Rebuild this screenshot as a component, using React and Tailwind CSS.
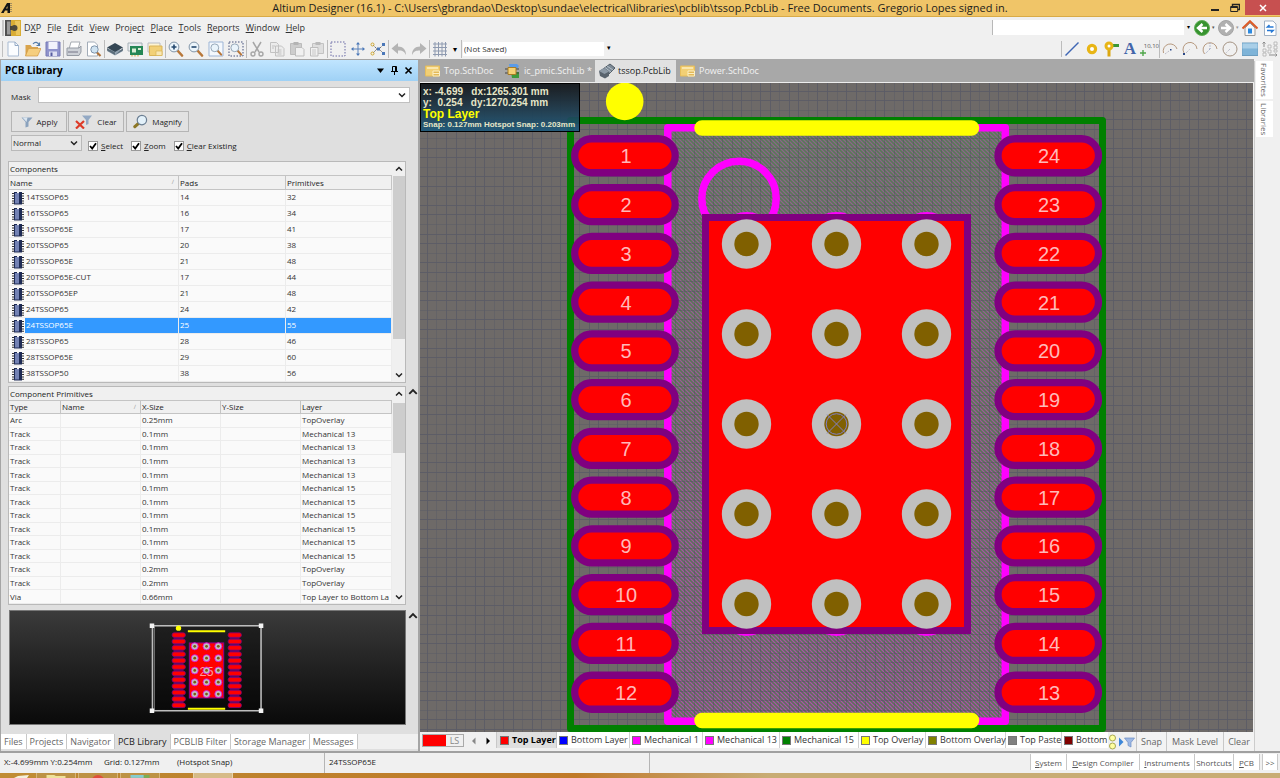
import React from "react";

const COMPONENTS = [
  ["14TSSOP65", 14, 32],
  ["16TSSOP65", 16, 34],
  ["16TSSOP65E", 17, 41],
  ["20TSSOP65", 20, 38],
  ["20TSSOP65E", 21, 48],
  ["20TSSOP65E-CUT", 17, 44],
  ["20TSSOP65EP", 21, 48],
  ["24TSSOP65", 24, 42],
  ["24TSSOP65E", 25, 55],
  ["28TSSOP65", 28, 46],
  ["28TSSOP65E", 29, 60],
  ["38TSSOP50", 38, 56],
];

const PRIMITIVES = [
  ["Arc", "0.25mm", "TopOverlay"],
  ["Track", "0.1mm", "Mechanical 13"],
  ["Track", "0.1mm", "Mechanical 13"],
  ["Track", "0.1mm", "Mechanical 13"],
  ["Track", "0.1mm", "Mechanical 13"],
  ["Track", "0.1mm", "Mechanical 15"],
  ["Track", "0.1mm", "Mechanical 15"],
  ["Track", "0.1mm", "Mechanical 15"],
  ["Track", "0.1mm", "Mechanical 15"],
  ["Track", "0.1mm", "Mechanical 15"],
  ["Track", "0.1mm", "Mechanical 15"],
  ["Track", "0.2mm", "TopOverlay"],
  ["Track", "0.2mm", "TopOverlay"],
  ["Via", "0.66mm", "Top Layer to Bottom La"],
];

const MENUS = [
  ["D", "X", "P"],
  ["", "F", "ile"],
  ["", "E", "dit"],
  ["", "V", "iew"],
  ["Proje", "c", "t"],
  ["", "P", "lace"],
  ["", "T", "ools"],
  ["", "R", "eports"],
  ["", "W", "indow"],
  ["", "H", "elp"],
];

const LAYERS = [
  ["Bottom Layer", "bg-[#0000ff]", "w-[73px]"],
  ["Mechanical 1", "bg-[#ff00ff]", "w-[73px]"],
  ["Mechanical 13", "bg-[#ff00ff]", "w-[77px]"],
  ["Mechanical 15", "bg-[#008000]", "w-[79px]"],
  ["Top Overlay", "bg-[#ffff00]", "w-[67px]"],
  ["Bottom Overlay", "bg-[#808000]", "w-[80px]"],
  ["Top Paste", "bg-[#808080]", "w-[56px]"],
  ["Bottom", "bg-[#800000]", "w-[73px]"],
];

function Ico({ children, className = "h-4 w-4" }) {
  return (
    <svg viewBox="0 0 16 16" className={`${className} shrink-0`} fill="none" aria-hidden="true">
      {children}
    </svg>
  );
}

function Tool({ label, children, className = "w-5" }) {
  return (
    <button type="button" aria-label={label} className={`flex h-5 shrink-0 items-center justify-center ${className}`}>
      <Ico>{children}</Ico>
    </button>
  );
}

const Sep = () => <span className="h-[18px] w-px shrink-0 bg-[#bcbcbc]" />;

function Chevron({ up = false, className = "h-2 w-2" }) {
  return (
    <svg viewBox="0 0 8 8" className={className} fill="none" stroke="#222" strokeWidth="1.5" aria-hidden="true">
      <path d={up ? "M1 5.5 4 2.5 7 5.5" : "M1 2.5 4 5.5 7 2.5"} />
    </svg>
  );
}

function Lens({ cx = 6, cy = 6, sign }) {
  return (
    <g>
      <path d={`M${cx + 3} ${cy + 3}L${cx + 8} ${cy + 8.5}`} stroke="#b8773a" strokeWidth="2.6" strokeLinecap="round" />
      <circle cx={cx} cy={cy} r="4.9" fill="#eaf4fb" stroke="#8295a8" />
      {sign && <path d={sign} stroke="#23476e" strokeWidth="1.6" />}
    </g>
  );
}

function ChipIcon() {
  return (
    <svg viewBox="0 0 12 14" className="h-[14px] w-3 shrink-0" aria-hidden="true">
      <path d="M0 2.500h12M0 5h12M0 7.500h12M0 10h12M0 12.200h12" stroke="#333" strokeWidth="1.1" />
      <rect x="2" y="1" width="8" height="12.5" fill="#1e2b55" />
      <rect x="3" y="2" width="4" height="10.5" fill="#7382b4" />
      <rect x="5" y="0.5" width="2" height="1.6" fill="#f4f4f4" />
    </svg>
  );
}

function SheetIcon() {
  return (
    <Ico className="h-4 w-4">
      <path d="M.5 3h14v10h-14z" fill="#f2cf74" stroke="#e6bd5b" />
      <path d="M2 5h11" stroke="#fae6ac" strokeWidth="2" />
      <path d="M8 8h6.500v5H8zM8 10.500h6.500" stroke="#fbeec4" fill="#e3b958" />
    </Ico>
  );
}

function Funnel({ className = "h-3 w-3", fill = "#8aa2bd" }) {
  return (
    <svg viewBox="0 0 12 12" className={`${className} shrink-0`} aria-hidden="true">
      <path d="M.5 1.500h11L7.500 6v4.500l-3 1V6z" fill={fill} />
      <path d="M1.500 1.500h5L5.500 6z" fill="#dbe6f0" />
    </svg>
  );
}

function MainMenu() {
  return (
    <div className="flex h-[21px] shrink-0 items-center bg-[#f0f0f0]">
      <span className="ml-[2px] h-4 w-[2px] bg-[#c8c8c8]" />
      <svg viewBox="0 0 16 16" className="ml-px h-4 w-4" aria-hidden="true">
        <rect width="16" height="16" fill="#d9ad35" />
        <path d="M0 0h6v16H0z" fill="#515151" />
        <path d="M2 1.500h3.500v13H2z" fill="#9a9a9a" />
        <path d="M10 1h5v14h-4z" fill="#ecc75e" />
        <path d="M5 6h5v4H5z" fill="#4a463a" />
        <circle cx="9.5" cy="8" r="3" fill="#4f4a3c" />
      </svg>
      <nav className="ml-[3px] flex flex-1 gap-[6px]">
        {MENUS.map(([a, b, c]) => (
          <button type="button" key={a + b + c} className="leading-3 text-[#303030]">
            {a}
            <u>{b}</u>
            {c}
          </button>
        ))}
      </nav>
      <label className="flex h-[15px] w-[200px] items-center border-l border-[#b8b8b8] bg-white">
        <input aria-label="Address" className="h-full min-w-0 flex-1 bg-white outline-none" />
        <span className="flex h-full w-2 items-center justify-center bg-[#f0f0f0] text-[6px] text-black">▾</span>
      </label>
      <Tool label="Back" className="w-5">
        <circle cx="8" cy="8" r="7.5" fill="#37932f" stroke="#5fae55" />
        <path d="M13 8H5M8.500 4 4 8l4.500 4" stroke="#fff" strokeWidth="2.4" />
      </Tool>
      <span className="w-1 text-[5px] text-[#555]">▾</span>
      <Tool label="Forward" className="w-5">
        <circle cx="8" cy="8" r="7.5" fill="#b0b0b0" stroke="#a4a4a4" />
        <path d="M3 8h8M7.500 4 12 8l-4.500 4" stroke="#fff" strokeWidth="2.4" />
      </Tool>
      <span className="w-1 text-[5px] text-[#999]">▾</span>
      <Tool label="Home" className="w-5">
        <path d="M3 8v7.500h10V8L8 3z" fill="#f7f7f7" stroke="#999" />
        <path d="M.5 8.500 8 1.200l7.500 7.300" stroke="#dc5a26" strokeWidth="2" />
        <path d="M6 8.500h4v5H6z" fill="#2d8ae0" />
      </Tool>
      <Tool label="Refresh" className="w-5">
        <path d="M2.500 1h8.500l3 3v11.500H2.500z" fill="#fff" stroke="#9fb0c4" />
        <path d="M11.500 7H5.500l2-2M5 10.500h6l-2 2" stroke="#2779d5" strokeWidth="1.6" />
      </Tool>
    </div>
  );
}

function Toolbar() {
  return (
    <div className="flex h-[21px] shrink-0 items-center bg-[#f0f0f0]">
      <span className="ml-[2px] h-4 w-px shrink-0 bg-[#c0c0c0]" />
      <Tool label="New">
        <path d="M3 1h7l3.500 3.500V15H3z" fill="#fbfdff" stroke="#a9bbd2" />
        <path d="M10 1v3.500h3.500" stroke="#93a9c5" />
      </Tool>
      <Tool label="Open">
        <path d="M.5 4h5l1.500 2h6v9H.5z" fill="#d9a44c" />
        <path d="M3.500 7.500H16L12.500 15H.5z" fill="#f5ce7e" stroke="#d19a44" strokeWidth=".7" />
        <path d="M8 3c2-2.500 5-2 6 1M14.500 1.500V4.500H11.500" stroke="#547ca8" strokeWidth="1.2" />
      </Tool>
      <Tool label="Save">
        <path d="M1 1h14v14H1z" fill="#8f93cc" stroke="#777bb6" />
        <path d="M3.500 1h9v7h-9z" fill="#f2f3fc" />
        <path d="M4 10.500h8V15H4z" fill="#dfe1f3" />
        <path d="M5.500 11.500h2V15h-2z" fill="#575ca0" />
      </Tool>
      <Sep />
      <Tool label="Print">
        <path d="M5 1h9l-2 7H3z" fill="#fff" stroke="#a6abb2" />
        <path d="M1 7h12l2-2v6l-2 3.500H1z" fill="#cdd1d7" stroke="#959ba4" />
        <path d="M2 11h10" stroke="#778" />
      </Tool>
      <Tool label="Preview">
        <path d="M1.500 1h7l3 3v11h-10z" fill="#fff" stroke="#a2acb8" />
        <path d="m10.500 11 4 4" stroke="#ad7037" strokeWidth="2.2" />
        <circle cx="8.5" cy="8.5" r="3.7" fill="#cfe3f2" stroke="#7f95ab" />
      </Tool>
      <Sep />
      <Tool label="Layer stack">
        <path d="m0 10 8-4 8 4-8 4.500z" fill="#93a3b1" />
        <path d="m0 6.500 8-4.500 8 4.500L8 11z" fill="#354755" />
        <path d="M0 7v2.500l8 4.500V11.500zM16 7v2.500L8 14" fill="#5b6d7b" />
      </Tool>
      <Tool label="Board">
        <path d="M1 2h14v8H1z" fill="#e9edf0" stroke="#a6b0b6" />
        <path d="M3 5h13v9H3z" fill="#258755" />
        <path d="M5 7.500h4v4H5zM11 7h3v2h-3z" fill="#d9ecd4" />
        <path d="M5 14v1.500M8 14v1.500M11 14v1.500" stroke="#d6a632" />
      </Tool>
      <Tool label="Documents">
        <path d="M1 2h12v9H1z" fill="#fdf3d3" stroke="#b9bdc4" />
        <path d="M2.500 5H15v9.500H2.500z" fill="#f2d077" stroke="#d9b458" />
        <path d="M9 10h6v4.500H9z" fill="#f9e7b4" stroke="#d9b458" strokeWidth=".7" />
      </Tool>
      <Sep />
      <Tool label="Zoom in"><Lens sign="M3.500 6h5M6 3.500v5" /></Tool>
      <Tool label="Zoom out"><Lens sign="M3.500 6h5" /></Tool>
      <Tool label="Fit document">
        <path d="M1 1h14v14H1z" fill="#f4f8fd" stroke="#9db5d6" />
        <g transform="translate(2 2) scale(.8)"><Lens /></g>
      </Tool>
      <Tool label="Zoom selection">
        <path d="M1 1h14v14H1z" stroke="#46527c" strokeDasharray="1.5 1.5" />
        <g transform="translate(2 2) scale(.8)"><Lens /></g>
      </Tool>
      <Sep />
      <Tool label="Cut">
        <path d="m4 1 6 10M12 1 6 11" stroke="#a6a6a6" strokeWidth="1.5" />
        <circle cx="4" cy="13" r="2" stroke="#a6a6a6" strokeWidth="1.4" />
        <circle cx="12" cy="13" r="2" stroke="#a6a6a6" strokeWidth="1.4" />
      </Tool>
      <Tool label="Copy">
        <path d="M1.500 1.500h6l2 2v8h-8zM6.500 5h6l2.500 2.500v7.500H6.500z" fill="#ececec" stroke="#c2c2c2" />
        <path d="M8.500 9h4M8.500 11h4M8.500 13h4M3 5h3M3 7h2" stroke="#c2c2c2" />
      </Tool>
      <Tool label="Paste">
        <path d="M1.500 2.500h11v11h-11z" fill="#cdcdcd" stroke="#bcbcbc" />
        <path d="M4.500 1h5v3h-5z" fill="#b4b4b4" />
        <path d="M6.500 6.500H13l2 2V15H6.500z" fill="#f0f0f0" stroke="#bdbdbd" />
      </Tool>
      <Tool label="Paste array">
        <path d="M3.500 2.500h11v10h-11z" fill="#dedede" stroke="#c2c2c2" />
        <path d="M6.500 1h5v3h-5z" fill="#bababa" />
        <path d="M1.500 6.500H9V15H1.500z" fill="#f0f0f0" stroke="#bdbdbd" />
        <path d="M3 9h4M3 11h4M3 13h4" stroke="#c8c8c8" />
      </Tool>
      <Sep />
      <Tool label="Select area">
        <path d="M1 1h14v14H1z" stroke="#6a6aa6" strokeDasharray="1.5 1.5" />
      </Tool>
      <Tool label="Move">
        <path d="M8 2v12M2 8h12" stroke="#5c83bb" />
        <path d="m8 1 2 2.500H6zM8 15l2-2.500H6zM1 8l2.500-2v4zM15 8l-2.500-2v4z" fill="#4b78b8" />
      </Tool>
      <Tool label="Cross probe">
        <path d="m3 4 4 4-4 4" stroke="#666" strokeDasharray="2 1" />
        <path d="m13 4-4 4 4 4" stroke="#666" strokeDasharray="2 1" />
        <circle cx="2.5" cy="3.5" r="1.5" stroke="#d0a92f" />
        <circle cx="2.5" cy="12.5" r="1.5" stroke="#d0a92f" />
        <path d="M12 2h3v3h-3zM12 11h3v3h-3zM7 6.500h3v3H7z" fill="#4b78b8" />
      </Tool>
      <Sep />
      <Tool label="Undo"><path d="M7 2v3.500c5 0 8 3 8 8.500-2-4-4-4.500-8-4.500V13L.5 7.500z" fill="#b4b4b4" /></Tool>
      <Tool label="Redo"><path d="M9 2v3.500c-5 0-8 3-8 8.500 2-4 4-4.500 8-4.500V13l6.500-5.500z" fill="#b4b4b4" /></Tool>
      <Sep />
      <Tool label="Grid"><path d="M1 3h14M1 6.500h14M1 10h14M1 13.500h14M3 1v14.500M6.500 1v14.500M10 1v14.500M13.500 1v14.500" stroke="#8e9ab0" /></Tool>
      <span className="w-[9px] text-center text-[8px] text-black">▾</span>
      <span className="w-[2px]" />
      <Sep />
      <label className="relative ml-px flex h-[14px] w-[150px] shrink-0 items-center bg-white">
        <select aria-label="Saved view" className="h-full w-full appearance-none bg-white pl-px text-[8px] leading-[14px] text-[#333]">
          <option>(Not Saved)</option>
        </select>
        <span className="pointer-events-none absolute inset-y-0 right-0 flex w-[9px] items-center justify-center bg-[#f0f0f0] text-[7px] text-black">▾</span>
      </label>
      <span className="flex-1" />
      <span className="h-4 w-px bg-[#bcbcbc]" />
      <Tool label="Place line"><path d="M1.500 14.500 14.500 1.500" stroke="#3f66b4" strokeWidth="1.5" /></Tool>
      <Tool label="Place pad" className="w-[19px]"><circle cx="8" cy="8" r="3.6" stroke="#e8b515" strokeWidth="3.2" fill="#fff" /></Tool>
      <Tool label="Place via" className="w-[19px]">
        <path d="M7.500 4.500H16" stroke="#3d9834" strokeWidth="3" />
        <path d="M6 8v7.500" stroke="#dba710" strokeWidth="3" />
        <circle cx="6" cy="5" r="3" stroke="#e8b515" strokeWidth="3" fill="#fff" />
      </Tool>
      <button type="button" aria-label="Place text" className="h-5 w-5 shrink-0 font-['Liberation_Serif',serif] text-[17px] leading-5 font-bold text-[#4365aa]">A</button>
      <button type="button" aria-label="Place coordinate" className="relative flex h-5 w-[19px] shrink-0 justify-end pt-[3px] text-[6px] leading-[8px] text-[#555]">
        10,10
        <svg viewBox="0 0 6 6" className="absolute bottom-[3px] left-0 h-[6px] w-[6px]" stroke="#4fa64a" strokeWidth="1.4" aria-hidden="true"><path d="M3 0v6M0 3h6" /></svg>
      </button>
      <Sep />
      <Tool label="Arc by center">
        <path d="M1.500 12A7 7 0 1 1 15 8" stroke="#b79a80" />
        <path d="M8 8h1.500v1.500H8z" fill="#2b4887" /><path d="m3 13 4-3" stroke="#aab" strokeDasharray="1 1" />
      </Tool>
      <Tool label="Arc by edge">
        <path d="M2 12A7 7 0 1 1 15 8" stroke="#b79a80" /><path d="M1 12h2v2H1z" fill="#2b4887" />
        <path d="m4 12 4-4" stroke="#aab" strokeDasharray="1 1" />
      </Tool>
      <Tool label="Arc any angle">
        <path d="M2.500 13A7 7 0 1 1 15 8" stroke="#b79a80" /><path d="m8 8 0-6M8 8l-5 5" stroke="#8894b5" strokeDasharray="1 1.5" />
      </Tool>
      <Tool label="Full circle"><circle cx="8" cy="8" r="7" stroke="#a59484" /><path d="m8 8-4 4" stroke="#aab" strokeDasharray="1 1" /></Tool>
      <Tool label="Fill"><path d="M0 2h16v12.500H0z" fill="#7fb4d8" stroke="#6c9dbf" /><path d="M.5 2.500h15v5H.5z" fill="#a9cfe8" /></Tool>
      <Tool label="Array">
        <path d="M2 1v5M.5 2.500 2 1l1.500 1.500M7 14h8M13.500 12.500 15 14l-1.500 1.500" stroke="#8d8d8d" />
        <path d="M1 8h3v3H1zM1 12h3v3H1zM6 4h3v3H6zM6 9h3v3H6zM12 1h3v3h-3zM12 5h3v3h-3zM12 9h3v2h-3z" stroke="#b0b0b0" strokeWidth=".8" fill="#f5f5f5" />
      </Tool>
    </div>
  );
}

function ScrollBar({ thumb }) {
  return (
    <div className="flex w-[13px] shrink-0 flex-col items-center bg-[#f0f0f0]">
      <span className="flex h-[14px] items-center"><Chevron up /></span>
      <span className={`w-3 bg-[#cdcdcd] ${thumb}`} />
      <span className="flex-1" />
      <span className="flex h-[14px] items-center"><Chevron /></span>
    </div>
  );
}

const headCell = "border-r border-[#c4c4c4] p-0 pl-px text-left font-normal text-[#222]";
const bodyCell = "border-r border-b border-[#ececec] p-0 pl-px";

function ComponentsTable() {
  return (
    <section className="mx-[7px] flex border border-[#b9b9b9] bg-[#fafafa]">
      <div className="min-w-0 flex-1">
        <h2 className="h-[14px] border-b border-[#c4c4c4] bg-[#f0f0f0] pl-px leading-[13px]">Components</h2>
        <table className="w-full table-fixed border-separate border-spacing-0">
          <colgroup>
            <col className="w-[170px]" />
            <col className="w-[107px]" />
            <col />
          </colgroup>
          <thead>
            <tr className="h-[14px] bg-[#f0f0f0] leading-[13px]">
              <th className={`${headCell} border-b`}>
                <span className="flex justify-between pr-1">Name<span className="text-[6px] text-[#999]">∕</span></span>
              </th>
              <th className={`${headCell} border-b`}>Pads</th>
              <th className={`${headCell} border-b`}>Primitives</th>
            </tr>
          </thead>
          <tbody>
            {COMPONENTS.map(([name, pads, prims]) => {
              const sel = name === "24TSSOP65E";
              const tone = sel ? "bg-[#3399ff] text-white" : "text-[#333]";
              return (
                <tr key={name} className="h-4 leading-[13px]" aria-selected={sel}>
                  <td className="border-r border-b border-[#ececec] p-0">
                    <span className="flex h-[15px] items-center pl-[3px]">
                      <ChipIcon />
                      <span className={`ml-px flex-1 pb-[2px] pl-px ${tone}`}>{name}</span>
                    </span>
                  </td>
                  <td className={`${bodyCell} ${tone}`}><span className="block pb-[2px]">{pads}</span></td>
                  <td className={`${bodyCell} ${tone}`}><span className="block pb-[2px]">{prims}</span></td>
                </tr>
              );
            })}
          </tbody>
        </table>
      </div>
      <ScrollBar thumb="h-[163px]" />
    </section>
  );
}

function PrimitivesTable() {
  return (
    <section className="mr-[6px] ml-[7px] flex border border-[#b9b9b9] bg-[#fafafa]">
      <div className="min-w-0 flex-1">
        <h2 className="h-[14px] border-b border-[#c4c4c4] bg-[#f0f0f0] pl-px leading-[13px]">Component Primitives</h2>
        <table className="h-[203px] w-full table-fixed border-separate border-spacing-0">
          <colgroup>
            <col className="w-[52px]" />
            <col className="w-20" />
            <col className="w-20" />
            <col className="w-20" />
            <col />
          </colgroup>
          <thead>
            <tr className="h-[13px] bg-[#f0f0f0] leading-3">
              <th className={`${headCell} border-b`}>Type</th>
              <th className={`${headCell} border-b`}>
                <span className="flex justify-between pr-1">Name<span className="text-[6px] text-[#999]">∕</span></span>
              </th>
              <th className={`${headCell} border-b`}>X-Size</th>
              <th className={`${headCell} border-b`}>Y-Size</th>
              <th className={`${headCell} border-b`}>Layer</th>
            </tr>
          </thead>
          <tbody className="leading-3 text-[#333]">
            {PRIMITIVES.map(([type, x, layer], i) => (
              <tr key={i}>
                <td className={bodyCell}>{type}</td>
                <td className={bodyCell} />
                <td className={bodyCell}>{x}</td>
                <td className={bodyCell} />
                <td className={`${bodyCell} overflow-hidden whitespace-nowrap`}>{layer}</td>
              </tr>
            ))}
          </tbody>
        </table>
      </div>
      <ScrollBar thumb="mt-[2px] h-[50px]" />
    </section>
  );
}

function Preview() {
  const rows = Array.from({ length: 12 }, (_, i) => 635.5 + i * 6.5);
  return (
    <svg viewBox="10 611 396 115" className="h-[115px] min-w-0 flex-1 border border-[#777] bg-linear-to-b from-[#3b3b3b] to-[#0a0a0a]" role="img" aria-label="Footprint preview">
      <rect x="153" y="627" width="109" height="84" fill="#000" fillOpacity=".4" />
      {[171.5, 228.5].map((x) => (
        <g key={x}>
          <rect x={x + 2} y="634" width="10" height="75" fill="#560e62" />
          {rows.map((y) => (
            <rect key={y} x={x + 0.5} y={y - 2.3} width="13.5" height="4.6" rx="2" fill="#f00" stroke="#800080" strokeWidth=".8" />
          ))}
        </g>
      ))}
      <rect x="189.5" y="643.5" width="35" height="56" fill="#f00" stroke="#900090" />
      <text x="207" y="677" textAnchor="middle" fontSize="13" fill="#ff9d9d" fontFamily="Liberation Sans, sans-serif">25</text>
      {[195, 207, 219].map((x) => [647, 659, 671.5, 683.5, 695.5].map((y) => (
        <g key={`${x}-${y}`}>
          <circle cx={x} cy={y} r="3.6" fill="#c0c0c0" stroke="#e000e0" strokeWidth=".8" />
          <circle cx={x} cy={y} r="1.4" fill="#7a5a10" />
        </g>
      )))}
      <path d="M188 631.500h38M188 710.500h38" stroke="#ff0" strokeWidth="2" />
      <path d="M152 626h110.500v86.500H152z" fill="none" stroke="#bdbdbd" strokeWidth="1.6" />
      <path d="M154 626v86" stroke="#888" strokeWidth=".8" />
      <circle cx="178.5" cy="628.5" r="2.7" fill="#ff0" />
      {[[151.5, 626], [262.5, 626], [151.5, 712.5], [262.5, 712.5]].map(([x, y]) => (
        <rect key={`${x}${y}`} x={x - 2.3} y={y - 2.3} width="4.6" height="4.6" fill="#f4f4f4" />
      ))}
    </svg>
  );
}

function Check({ label, first, rest }) {
  return (
    <label className="flex items-center gap-[3px] leading-3">
      <span className="relative flex h-[10px] w-[10px]">
        <input type="checkbox" defaultChecked aria-label={label} className="peer h-[10px] w-[10px] appearance-none border border-[#999] bg-white" />
        <svg viewBox="0 0 10 10" className="pointer-events-none absolute inset-0 hidden peer-checked:block" fill="none" stroke="#000" strokeWidth="1.8" aria-hidden="true">
          <path d="M2 5 4.200 7.500 8 2.300" />
        </svg>
      </span>
      <span><u>{first}</u>{rest}</span>
    </label>
  );
}

const panelButton = "flex h-[21px] items-center justify-center gap-1 border border-[#b5b5b5] bg-[#e2e2e2] leading-3";

function LibraryPanel() {
  const tabs = ["Files", "Projects", "Navigator", "PCB Library", "PCBLIB Filter", "Storage Manager", "Messages"];
  return (
    <aside className="flex w-[420px] shrink-0 flex-col border-t border-r-2 border-l border-[#a5a5a5] bg-[#dfdfdf] text-[8px] text-[#222]">
      <header className="flex h-[21px] items-center gap-[5px] bg-linear-to-b from-[#c0e5ff] to-[#9fd1f5] pr-[5px] pl-1">
        <h1 className="flex-1 text-[10px] font-bold text-black">PCB Library</h1>
        <button type="button" aria-label="Panel menu" className="flex h-3 w-[9px] items-center">
          <svg viewBox="0 0 9 9" className="h-[9px] w-[9px]"><path d="M1 2.500h7L4.500 7z" /></svg>
        </button>
        <button type="button" aria-label="Pin" className="flex h-3 w-[9px] items-center">
          <svg viewBox="0 0 9 9" className="h-[9px] w-[9px]" fill="none" stroke="#000"><path d="M2.500 0.500h4v5h-4zM5.500 0v5.500M1 5.500h7M4.500 5.500V9" /></svg>
        </button>
        <button type="button" aria-label="Close panel" className="flex h-3 w-[9px] items-center">
          <svg viewBox="0 0 9 9" className="h-[9px] w-[9px]" stroke="#000" strokeWidth="1.6"><path d="m1.500 1.500 6 6M7.500 1.500l-6 6" /></svg>
        </button>
      </header>
      <div className="flex items-center pt-[6px] pr-2 pl-[10px]">
        <label htmlFor="mask" className="w-[27px] pt-1 leading-3">Mask</label>
        <span className="relative flex flex-1">
          <input id="mask" className="h-4 w-full border border-[#c0c0c0] bg-white px-1 outline-none" />
          <Chevron className="pointer-events-none absolute top-1 right-1 h-2 w-2" />
        </span>
      </div>
      <div className="mt-2 ml-[10px] flex gap-px">
        <button type="button" className={`${panelButton} w-14`}><Funnel />Apply</button>
        <button type="button" className={`${panelButton} w-14`}>
          <svg viewBox="0 0 18 14" className="h-[14px] w-[18px]" fill="none">
            <path d="m1 6 8 7.500M9 6l-8 7.500" stroke="#dd3a28" strokeWidth="2.2" />
            <path d="M7 .5h10L13.500 5v4l-2.500 1V5z" fill="#93a9c4" />
          </svg>
          Clear
        </button>
        <button type="button" className={`${panelButton} ml-px w-[63px]`}>
          <svg viewBox="0 0 16 16" className="h-[15px] w-[15px]" fill="none">
            <path d="m6.500 9.500-4.500 4" stroke="#8d7726" strokeWidth="3.4" strokeLinecap="round" />
            <circle cx="9.5" cy="6.5" r="5" fill="#e3f1fa" stroke="#6b7f93" strokeWidth="1.3" />
          </svg>
          Magnify
        </button>
      </div>
      <div className="mt-[3px] ml-[10px] flex h-[17px] items-start">
        <label className="relative flex h-4 w-[71px] items-center border border-[#b9b9b9] bg-[#e6e6e6]">
          <select aria-label="Highlight mode" className="h-full w-full appearance-none pl-px leading-[14px]">
            <option>Normal</option>
          </select>
          <Chevron className="pointer-events-none absolute right-[3px] h-2 w-2" />
        </label>
        <div className="mt-[5px] ml-[6px] flex gap-2">
          <Check label="Select" first="S" rest="elect" />
          <Check label="Zoom" first="Z" rest="oom" />
          <Check label="Clear Existing" first="C" rest="lear Existing" />
        </div>
      </div>
      <div className="mt-[9px] mr-[5px]"><ComponentsTable /></div>
      <div className="mt-[3px] flex items-start">
        <div className="min-w-0 flex-1"><PrimitivesTable /></div>
        <span className="-ml-[4px] flex h-3 w-[10px] items-center"><Chevron up className="h-[10px] w-[10px]" /></span>
      </div>
      <div className="mt-[5px] flex items-start pl-2">
        <Preview />
        <span className="ml-[2px] flex h-3 w-[10px] items-center"><Chevron up className="h-[10px] w-[10px]" /></span>
      </div>
      <nav className="mt-auto mb-[2px] flex h-[15px] bg-[#f0f0f0] text-[9px]">
        {tabs.map((t) => (
          <button
            type="button"
            key={t}
            className={`border-r border-[#c8c8c8] px-[3px] leading-[14px] whitespace-nowrap ${t === "PCB Library" ? "bg-[#dfdfdf] text-[#222]" : "bg-white text-[#666]"}`}
          >
            {t}
          </button>
        ))}
      </nav>
    </aside>
  );
}

/* Footprint drawing: 0.127 mm grid, 0.65 mm pad pitch, origin at the centre via. */
const CX = 836.5;
const CY = 424;
const GRID = 9.525;
const PITCH = 48.77;

function Canvas() {
  const pads = Array.from({ length: 12 }, (_, i) => CY + (i - 5.5) * PITCH);
  const cols = Array.from({ length: 90 }, (_, i) => i - 45);
  const ringY = [244, 334, 424, 514, 604];
  const ringX = [746.5, 836.5, 926.5];
  return (
    <svg viewBox="420 83 833 649" preserveAspectRatio="xMidYMid slice" className="block min-h-[600px] w-full flex-1 bg-[#6e6a68]" role="img" aria-label="24TSSOP65E footprint">
      <defs>
        <pattern id="hatch" width="4" height="4" patternUnits="userSpaceOnUse">
          <path d="M-1-1 5 5M3-1 5 1M-1 3 1 5" stroke="#b34cb3" strokeWidth="1.1" />
          <path d="M1-1 5 3M-1 1 3 5" stroke="#4d7a4d" strokeWidth="1.1" />
        </pattern>
        <linearGradient id="moire" x1="0" y1="0" x2="0" y2="1">
          <stop offset="0" stopColor="#5f7f5f" stopOpacity=".45" />
          <stop offset=".5" stopColor="#6e7068" stopOpacity=".25" />
          <stop offset="1" stopColor="#a050a0" stopOpacity=".12" />
        </linearGradient>
      </defs>
      <g shapeRendering="crispEdges" fill="#5a5b66">
        {cols.map((i) => <rect key={`v${i}`} x={Math.round(CX + i * GRID)} y="0" width="1" height="860" opacity={i % 3 === 0 ? 0.5 : 0.85} />)}
        {cols.map((i) => <rect key={`h${i}`} x="380" y={Math.round(CY + i * GRID)} width="920" height="1" opacity={i % 3 === 0 ? 0.5 : 0.85} />)}
      </g>
      <rect x="668" y="128" width="337" height="593" fill="url(#hatch)" />
      <rect x="668" y="128" width="337" height="593" fill="url(#moire)" />
      <g fill="#474b55" opacity=".3" shapeRendering="crispEdges">
        {cols.filter((i) => Math.abs(i) < 18).map((i) => <rect key={`a${i}`} x={Math.round(CX + i * GRID)} y="128" width="1" height="592" />)}
        {cols.filter((i) => Math.abs(i) < 32).map((i) => <rect key={`b${i}`} x="668" y={Math.round(CY + i * GRID)} width="336" height="1" />)}
      </g>
      <rect x="570.5" y="120.5" width="532" height="608" fill="none" stroke="#008000" strokeWidth="7" strokeLinejoin="round" />
      <rect x="667.8" y="127.8" width="337.5" height="593.5" fill="none" stroke="#f0f" strokeWidth="7.5" strokeLinejoin="round" />
      <circle cx="739" cy="198.5" r="37.2" fill="none" stroke="#f0f" strokeWidth="7.5" />
      {ringX.map((x) => [244, 604].map((y) => <circle key={`${x}${y}`} cx={x} cy={y} r="32" fill="#f0f" />))}
      <circle cx="624.7" cy="101.5" r="18.8" fill="#ff0" />
      <path d="M702 128h269.500M702 720.500h269.500" stroke="#ff0" strokeWidth="15.5" strokeLinecap="round" />
      {pads.map((y, i) => (
        <g key={y} fontFamily="Liberation Sans, sans-serif" fontSize="20" textAnchor="middle">
          <rect x="574.7" y={y - 17} width="100.5" height="34" rx="17" fill="#f00" stroke="#800080" strokeWidth="7.3" />
          <rect x="998" y={y - 17} width="100.5" height="34" rx="17" fill="#f00" stroke="#800080" strokeWidth="7.3" />
          <text x="626" y={y + 7.5} fill="#ffb9b9">{i + 1}</text>
          <text x="1049" y={y + 7.5} fill="#ffb9b9">{24 - i}</text>
        </g>
      ))}
      <rect x="705.5" y="217.5" width="262" height="413" fill="#f00" stroke="#800080" strokeWidth="7" />
      {ringX.map((x) => ringY.map((y) => (
        <g key={`${x}-${y}`}>
          <circle cx={x} cy={y} r="24.7" fill="#c0c0c0" />
          <circle cx={x} cy={y} r="12.2" fill="#806000" />
        </g>
      )))}
      <g fill="none" stroke="#8080c8">
        <circle cx={CX} cy={CY} r="10.3" />
        <path d="m827 414.500 19 19M846 414.500l-19 19" />
      </g>
    </svg>
  );
}

function DocTab({ icon, children, active, className = "" }) {
  return (
    <button type="button" className={`flex items-center gap-[3px] pr-[6px] pl-1 leading-3 whitespace-nowrap ${active ? "bg-[#e1e1e1] text-[#222]" : "text-[#f2f2f2]"} ${className}`}>
      {icon}
      {children}
    </button>
  );
}

function LayerBar() {
  const side = "border-l border-[#c8c8c8] bg-[#f3f3f3] text-[#666]";
  return (
    <div className="flex h-[19px] shrink-0 items-stretch bg-[#f0f0f0]">
      <div className="mt-[2px] mb-1 ml-[2px] flex w-[42px] shrink-0 border border-[#aaa]">
        <span className="w-[23px] bg-[#f00]" />
        <button type="button" className="flex-1 leading-3 text-[#888]">LS</button>
      </div>
      <button type="button" aria-label="Previous layer" className="ml-[3px] flex w-[14px] items-center justify-center pb-[2px]">
        <svg viewBox="0 0 8 8" className="h-2 w-2"><path d="M5.500.5v7L2 4z" fill="#888" /></svg>
      </button>
      <button type="button" aria-label="Next layer" className="flex w-[14px] items-center justify-center pb-[2px]">
        <svg viewBox="0 0 8 8" className="h-2 w-2"><path d="M2.500.5v7L6 4z" /></svg>
      </button>
      <div className="mb-[3px] ml-px flex min-w-0 flex-1 overflow-hidden">
        <button type="button" className="flex w-[61px] shrink-0 items-center gap-[3px] border-x border-[#c8c8c8] bg-[#dfdfdf] pl-[3px] font-bold whitespace-nowrap text-black">
          <span className="h-[9px] w-[9px] shrink-0 border border-[#777] bg-[#f00]" />
          Top Layer
        </button>
        {LAYERS.map(([name, swatch, width]) => (
          <button type="button" key={name} className={`flex shrink-0 items-center gap-[3px] border-r border-[#d0d0d0] bg-white pl-[2px] whitespace-nowrap text-[#333] ${width}`}>
            <span className={`h-[9px] w-[9px] shrink-0 border border-[#777] ${swatch}`} />
            {name}
          </button>
        ))}
      </div>
      <div className="flex w-7 shrink-0 items-center pl-px">
        <svg viewBox="0 0 26 16" className="h-4 w-[26px]" aria-hidden="true">
          <circle cx="3.5" cy="4" r="3" fill="#ffffa0" stroke="#a8a852" />
          <circle cx="3.5" cy="12" r="3" fill="#ffffa0" stroke="#a8a852" />
          <path d="M10 3.500v9l4.500-4.500z" fill="#3d87d8" />
          <path d="M15.500 4h10L22 8.500v4.500l-3-1.500v-3z" fill="#9db8e4" stroke="#6b8cc4" strokeWidth=".7" />
        </svg>
      </div>
      <button type="button" className={`w-[30px] shrink-0 ${side}`}>Snap</button>
      <button type="button" className={`w-[57px] shrink-0 whitespace-nowrap ${side}`}>Mask Level</button>
      <button type="button" className={`w-[31px] shrink-0 ${side}`}>Clear</button>
    </div>
  );
}

function Editor() {
  return (
    <main className="flex min-w-0 flex-1 flex-col bg-[#a8a8a8]">
      <nav className="mt-px flex h-[22px] shrink-0 pl-px">
        <DocTab className="w-[80px]" icon={<SheetIcon />}>Top.SchDoc</DocTab>
        <DocTab
          className="w-[94px]"
          icon={
            <Ico>
              <path d="M4 1h8l2 2-2 3H5z" fill="#5b9be8" />
              <path d="M6 9h8v6H7z" fill="#3e9a3d" />
              <path d="M0 6h14M0 10h14" stroke="#444" />
              <path d="M3 4.500h8v7H3z" fill="#f5d276" stroke="#a87c25" />
            </Ico>
          }
        >
          ic_pmic.SchLib *
        </DocTab>
        <DocTab
          active
          className="w-[81px]"
          icon={
            <Ico>
              <path d="m4 6 7-5 5 4-6 6z" fill="#7c8995" stroke="#505b65" />
              <path d="m6 4.500 6 4.500M8 3l6 4" stroke="#c7d0d8" strokeWidth=".8" />
              <path d="m0 8 5-3 5 3.500V13l-4 2.500L1 13z" fill="#59636d" />
              <path d="m0 8 5-3 5 3.500-4.500 2.500z" fill="#8d99a5" />
            </Ico>
          }
        >
          tssop.PcbLib
        </DocTab>
        <DocTab icon={<SheetIcon />}>Power.SchDoc</DocTab>
      </nav>
      <div className="relative flex flex-1 flex-col border-t border-r border-[#eee]">
        <Canvas />
        <div className="absolute top-0 left-0 h-[49px] w-40 border border-black bg-linear-to-b from-[#161a1e]/95 to-[#1c5a7c]/90 pt-[2px] pl-[2px] font-['Liberation_Sans',sans-serif] text-[10px] leading-[11px] font-bold whitespace-pre text-[#e6e6c8]">
          <p>{"x: -4.699   dx:1265.301 mm"}</p>
          <p>{"y:  0.254   dy:1270.254 mm"}</p>
          <p className="text-[12px] leading-[13px] text-[#ffff00]">Top Layer</p>
          <p className="text-[8px] leading-2">Snap: 0.127mm Hotspot Snap: 0.203mm</p>
        </div>
      </div>
      <LayerBar />
    </main>
  );
}

function StatusBar() {
  const b = "shrink-0 border-r border-[#c8c8c8] bg-white text-[#555] whitespace-nowrap";
  return (
    <footer className="flex h-[22px] shrink-0 items-center border-t-2 border-[#a0a0a0] bg-[#f0f0f0] pl-1 text-[8px] leading-[18px] text-[#222]">
      <span className="h-full w-[100px]">X:-4.699mm Y:0.254mm</span>
      <span className="h-full w-[73px]">Grid: 0.127mm</span>
      <span className="h-full w-[147px]">(Hotspot Snap)</span>
      <span className="h-full w-[325px] border-l border-[#b5b5b5] pl-1">24TSSOP65E</span>
      <span className="h-full flex-1 border-l border-[#b5b5b5]" />
      <div className="mr-[2px] mb-[2px] flex h-4 leading-[15px]">
        <button type="button" className={`${b} w-[37px] border-l`}><u>S</u>ystem</button>
        <button type="button" className={`${b} w-[73px]`}><u>D</u>esign Compiler</button>
        <button type="button" className={`${b} w-[55px]`}><u>I</u>nstruments</button>
        <button type="button" className={`${b} w-[39px]`}>Shortcuts</button>
        <button type="button" className={`${b} w-[26px]`}><u>P</u>CB</button>
        <button type="button" className={`${b} ml-[2px] w-4 border-l`}>&gt;&gt;</button>
      </div>
    </footer>
  );
}

function TaskBar() {
  const cell = "h-full w-10 shrink-0 overflow-hidden border-x border-[#d6b478] bg-[#bd9245]";
  return (
    <div className="flex h-[5px] shrink-0 bg-linear-to-r from-[#bd8630] from-10% via-[#c07a28] via-45% to-[#c8ac74] to-60%">
      <span className="w-9 bg-[#c08c34]">
        <svg viewBox="0 0 36 5" className="h-[5px] w-9"><path d="m14 5 4-2 11-1-2 3z" fill="#f3f0dc" /></svg>
      </span>
      <span className={cell}><svg viewBox="0 0 40 5" className="h-[5px] w-full"><path d="M10 2h8l2 1h10v2H10z" fill="#eee29a" /></svg></span>
      <span className={`${cell} ml-[2px]`}><svg viewBox="0 0 40 5" className="h-[5px] w-full"><circle cx="20" cy="9" r="7" fill="#e04e3c" /></svg></span>
      <span className={`${cell} ml-[2px]`}><svg viewBox="0 0 40 5" className="h-[5px] w-full"><path d="M10 2h14v3H10z" fill="#86cdd0" /><path d="M24 2h6v3h-6z" fill="#7aae56" /></svg></span>
      <span className="ml-[33px] h-full w-10 shrink-0 border-x border-[#e6d3ac] bg-[#d6bb88]" />
    </div>
  );
}

export default function App() {
  return (
    <div className="flex min-h-screen flex-col bg-[#f0f0f0] font-['Open_Sans','Noto_Sans',sans-serif] text-[9px] text-[#333]">
      <div className="flex h-[17px] shrink-0 items-center border-b border-[#d9ab47] bg-[#f0c568]">
        <svg viewBox="0 0 12 12" className="ml-px h-3 w-3" aria-hidden="true">
          <path d="M0 11 6 1h3v10H6.500V8.500H4L2.700 11zM5 6.500h1.500V4z" fill="#151515" />
          <path d="M10 1v10" stroke="#555" strokeDasharray="1 1" />
        </svg>
        <h1 className="flex-1 pl-[62px] text-center text-[11px] leading-4 whitespace-nowrap text-[#1c1c1c]">
          Altium Designer (16.1) - C:\Users\gbrandao\Desktop\sundae\electrical\libraries\pcblib\tssop.PcbLib - Free Documents. Gregorio Lopes signed in.
        </h1>
        <button type="button" aria-label="Minimize" className="flex h-full w-5 items-center justify-center"><span className="mt-1 h-[2px] w-2 bg-[#222]" /></button>
        <button type="button" aria-label="Restore" className="flex h-full w-5 items-center justify-center">
          <svg viewBox="0 0 10 10" className="h-[10px] w-[10px]" fill="none" stroke="#222"><path d="M2.500 3V1.500h7v5H8" strokeWidth="1.4" /><path d="M.7 3.500h7v5h-7zM.7 4.500h7" /></svg>
        </button>
        <button type="button" aria-label="Close" className="flex h-[15px] w-[35px] items-center justify-center self-start bg-[#c75050]">
          <svg viewBox="0 0 8 8" className="h-2 w-2" stroke="#fff" strokeWidth="1.5"><path d="m1 1 6 6M7 1 1 7" /></svg>
        </button>
      </div>
      <MainMenu />
      <Toolbar />
      <div className="flex flex-1">
        <LibraryPanel />
        <Editor />
        <aside className="mt-[2px] flex w-[26px] shrink-0 flex-col items-start border-l border-[#ccc] bg-[#f0f0f0] pl-px text-[8px]">
          <button type="button" className="h-[38px] w-[17px] bg-white leading-[17px] text-[#666] [writing-mode:vertical-rl]">Favorites</button>
          <button type="button" className="mt-[2px] h-9 w-[17px] bg-white leading-[17px] text-[#666] [writing-mode:vertical-rl]">Libraries</button>
        </aside>
      </div>
      <StatusBar />
      <TaskBar />
    </div>
  );
}
